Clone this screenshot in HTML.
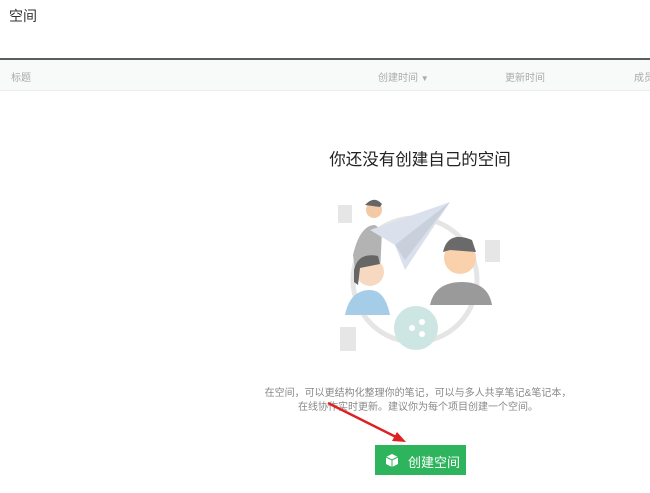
<!DOCTYPE html>
<html><head><meta charset="utf-8"><style>
body{margin:0;width:650px;height:493px;background:#fff;font-family:"Liberation Sans","Noto Sans CJK SC",sans-serif;position:relative;overflow:hidden}
.a{position:absolute;white-space:nowrap}
</style></head><body>
<div class="a" style="left:9px;top:6px;font-size:14px;color:#333">空间</div>
<div class="a" style="left:0;top:58px;width:650px;height:2px;background:#5a5f5c"></div>
<div class="a" style="left:0;top:60px;width:650px;height:30px;background:#f8f9f9;border-bottom:1px solid #eee"></div>
<div class="a" style="left:11px;top:69px;font-size:10px;color:#aaa">标题</div>
<div class="a" style="left:378px;top:69px;font-size:10px;color:#aaa">创建时间 <span style="font-size:8px">▼</span></div>
<div class="a" style="left:505px;top:69px;font-size:10px;color:#aaa">更新时间</div>
<div class="a" style="left:634px;top:69px;font-size:10px;color:#aaa">成员</div>
<div class="a" style="left:320px;top:146px;width:200px;text-align:center;font-size:16.5px;color:#222">你还没有创建自己的空间</div>
<svg class="a" style="left:320px;top:190px" width="200" height="170">
<circle cx="95" cy="90" r="62" fill="none" stroke="#e5e5e5" stroke-width="5"/>
<rect x="18" y="15" width="14" height="18" fill="#e6e6e6"/>
<rect x="165" y="50" width="15" height="22" fill="#e6e6e6"/>
<rect x="20" y="137" width="16" height="24" fill="#e6e6e6"/>
<path d="M33 65 Q40 35 55 35 L62 40 L60 85 L35 80Z" fill="#b3b3b3"/>
<circle cx="54" cy="20" r="8" fill="#f4c9a6"/><path d="M45 15 Q54 5 62 14 L60 17Z" fill="#666"/>
<path d="M50 40 L130 12 L85 80 L75 55Z" fill="#dbe1ec"/><path d="M75 55 L130 12 L85 70Z" fill="#c8d0dc"/>
<path d="M25 125 Q30 100 50 100 Q65 100 70 125Z" fill="#a6cde8"/>
<circle cx="50" cy="82" r="14" fill="#f7d9c2"/><path d="M34 80 Q38 62 58 66 L60 74 L40 78 L38 95 L34 92Z" fill="#666"/>
<path d="M110 115 Q115 92 142 92 Q168 92 172 115Z" fill="#9a9a9a"/>
<circle cx="140" cy="68" r="16" fill="#f9d2ad"/><path d="M123 62 Q128 40 152 50 L156 62 L130 60Z" fill="#6a6a6a"/>
<circle cx="96" cy="138" r="22" fill="#cde6e3"/><circle cx="92" cy="138" r="3" fill="#fff"/><circle cx="102" cy="132" r="3" fill="#fff"/><circle cx="102" cy="144" r="3" fill="#fff"/>
</svg>
<div class="a" style="left:250px;top:387px;width:336px;text-align:center;font-size:10px;line-height:14px;color:#888">在空间，可以更结构化整理你的笔记，可以与多人共享笔记&amp;笔记本，<br>在线协作实时更新。建议你为每个项目创建一个空间。</div>
<div class="a" style="left:375px;top:445px;width:91px;height:30px;background:#2eb45c"></div>
<svg class="a" style="left:384px;top:452px" width="18" height="18"><path d="M2 5 L8 2 L14 5 L14 12 L8 15 L2 12Z" fill="#fff"/><path d="M2 5 L8 8 L14 5 M8 8 L8 15" stroke="#2eb45c" fill="none"/></svg>
<div class="a" style="left:408px;top:452px;font-size:13px;color:#fff">创建空间</div>
<svg class="a" style="left:0;top:0" width="650" height="493"><line x1="328" y1="403" x2="398" y2="438" stroke="#d22" stroke-width="2.5"/><path d="M406 442 L392 441 L397 432Z" fill="#d22"/></svg>
</body></html>
